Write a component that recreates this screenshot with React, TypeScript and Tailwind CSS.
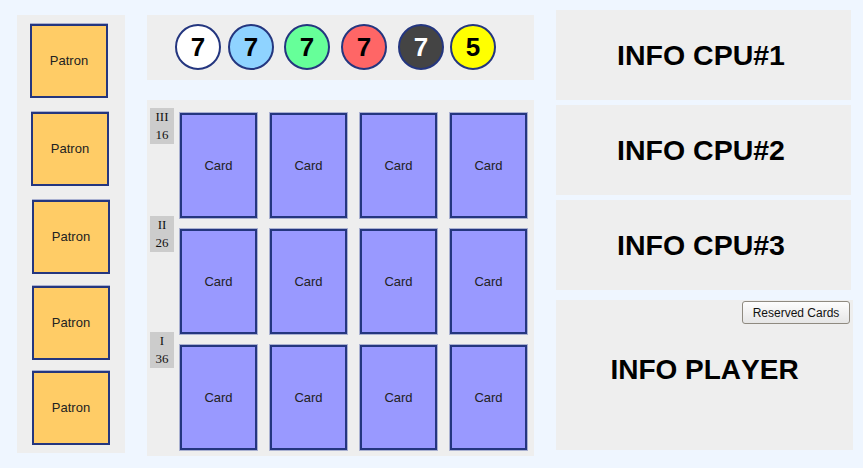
import React from "react";

const patrons = [
  "mt-[9px] ml-[13px]",
  "mt-[14px] ml-[14px]",
  "mt-[14px] ml-[15px]",
  "mt-[12px] ml-[15px]",
  "mt-[11px] ml-[15px]",
];

const gems = [
  { v: 7, cls: "ml-[28px] bg-white text-black" },
  { v: 7, cls: "ml-[7px] bg-[#8fd3ff] text-black" },
  { v: 7, cls: "ml-[10px] bg-[#66ff99] text-black" },
  { v: 7, cls: "ml-[11px] bg-[#ff6666] text-black" },
  { v: 7, cls: "ml-[11px] bg-[#444444] text-white" },
  { v: 5, cls: "ml-[6px] bg-[#ffff00] text-black" },
];

const rows = [
  { lvl: "III", n: 16, rowCls: "mt-[13px]", labelCls: "mt-[-5px]" },
  { lvl: "II", n: 26, rowCls: "mt-[11px]", labelCls: "mt-[-13px]" },
  { lvl: "I", n: 36, rowCls: "mt-[11px]", labelCls: "mt-[-13px]" },
];

function Card() {
  return (
    <div className="w-[77px] h-[105px] bg-[#9999ff] border-2 border-[#24367f] shadow-[0_0_0_1px_#a9b0d0] flex items-center justify-center text-[13px] text-[#222]">
      Card
    </div>
  );
}

export default function App() {
  return (
    <div className="w-[863px] min-h-[468px] bg-[#eff6ff] flex items-start font-['Liberation_Sans',Arial,sans-serif] [font-kerning:none]">
      {/* Left: patrons */}
      <div className="ml-[17px] mt-[15px] w-[108px] h-[438px] bg-[#eeeeee] flex flex-col">
        {patrons.map((c, i) => (
          <div
            key={i}
            className={`${c} w-[78px] h-[74px] bg-[#ffcc66] border-2 border-[#24367f] shadow-[0_-1px_0_0_#a9b0d0] flex items-center justify-center text-[13px] text-[#222]`}
          >
            Patron
          </div>
        ))}
      </div>

      {/* Middle */}
      <div className="ml-[22px] mt-[15px] w-[387px] flex flex-col">
        <div className="h-[65px] bg-[#eeeeee] flex items-start pt-[9px]">
          {gems.map((g, i) => (
            <div
              key={i}
              className={`${g.cls} w-[46px] h-[46px] rounded-full border-2 border-[#24367f] flex items-center justify-center text-[26px] font-bold leading-none`}
            >
              {g.v}
            </div>
          ))}
        </div>
        <div className="mt-[20px] h-[356px] bg-[#eeeeee] flex flex-col">
          {rows.map((r, i) => (
            <div key={i} className={`${r.rowCls} flex items-start`}>
              <div
                className={`${r.labelCls} ml-[3px] w-[24px] h-[36px] bg-[#cccccc] flex flex-col items-center justify-center font-['Liberation_Serif','Times_New_Roman',serif] text-[13px] leading-[18px] text-[#111]`}
              >
                <span>{r.lvl}</span>
                <span>{r.n}</span>
              </div>
              <div className="ml-[6px] flex gap-[13px]">
                <Card />
                <Card />
                <Card />
                <Card />
              </div>
            </div>
          ))}
        </div>
      </div>

      {/* Right */}
      <div className="ml-[22px] mt-[10px] w-[297px] flex flex-col">
        {["INFO CPU#1", "INFO CPU#2", "INFO CPU#3"].map((t, i) => (
          <div
            key={t}
            className={`${i === 0 ? "" : "mt-[5px]"} w-[295px] h-[90px] pr-[5px] bg-[#eeeeee] flex items-center justify-center text-[28.5px] font-bold text-black`}
          >
            {t}
          </div>
        ))}
        <div className="mt-[10px] w-[297px] h-[150px] bg-[#eeeeee] flex flex-col">
          <button className="self-end mt-px mr-[3px] w-[108px] h-[23px] rounded-[3px] border border-[#8f8a80] bg-gradient-to-b from-[#fdfdfd] to-[#e6e6e6] text-[12px] text-[#111] flex items-center justify-center">
            Reserved Cards
          </button>
          <div className="mt-[30px] text-center text-[28px] leading-[32px] font-bold text-black">
            INFO PLAYER
          </div>
        </div>
      </div>
    </div>
  );
}
